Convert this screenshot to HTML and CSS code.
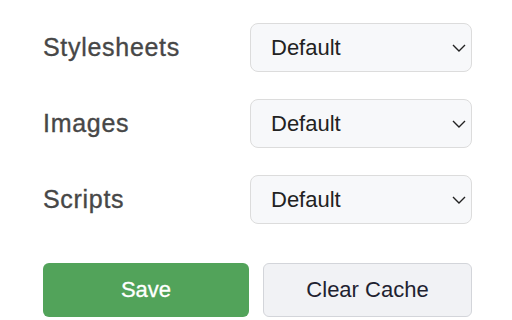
FILE: index.html
```html
<!DOCTYPE html>
<html lang="en">
<head>
  <meta charset="UTF-8">
  <meta name="viewport" content="width=device-width, initial-scale=1.0">
  <title>Cache Settings</title>
  <link rel="stylesheet" href="styles.css">
</head>
<body>
  <div class="settings">
    <div class="row">
      <label for="css">Stylesheets</label>
      <div class="select-wrap">
        <select id="css"><option>Default</option></select>
        <svg class="chevron" width="14" height="8" viewBox="0 0 14 8"><path d="M1 1l6 6 6-6" fill="none" stroke="#222" stroke-width="1.4"/></svg>
      </div>
    </div>
    <div class="row">
      <label for="img">Images</label>
      <div class="select-wrap">
        <select id="img"><option>Default</option></select>
        <svg class="chevron" width="14" height="8" viewBox="0 0 14 8"><path d="M1 1l6 6 6-6" fill="none" stroke="#222" stroke-width="1.4"/></svg>
      </div>
    </div>
    <div class="row">
      <label for="js">Scripts</label>
      <div class="select-wrap">
        <select id="js"><option>Default</option></select>
        <svg class="chevron" width="14" height="8" viewBox="0 0 14 8"><path d="M1 1l6 6 6-6" fill="none" stroke="#222" stroke-width="1.4"/></svg>
      </div>
    </div>

    <div class="actions">
      <button class="btn btn-save">Save</button>
      <button class="btn btn-clear">Clear Cache</button>
    </div>
  </div>
</body>
</html>
```

FILE: styles.css
```css
body {
  margin: 0;
  font-family: 'Liberation Sans', Arial, sans-serif;
  background: #fff;
}

.settings {
  width: 429px;
  padding: 23px 0 0 43px;
  display: flex;
  flex-direction: column;
  gap: 27px;
}

.row {
  display: grid;
  grid-template-columns: 207px 1fr;
  align-items: center;
}

.row label {
  font-size: 25px;
  letter-spacing: 0.7px;
  color: #474747;
  -webkit-text-stroke: 0.35px #474747;
}

.select-wrap {
  position: relative;
}

.select-wrap select {
  appearance: none;
  -webkit-appearance: none;
  width: 100%;
  height: 49px;
  padding: 0 0 0 20px;
  font-family: inherit;
  font-size: 22px;
  color: #222;
  background: #f7f8fa;
  border: 1.5px solid #dcdcdc;
  border-radius: 8px;
}

.chevron {
  position: absolute;
  right: 6px;
  top: 21px;
  pointer-events: none;
}

.actions {
  display: grid;
  grid-template-columns: 206px 1fr;
  gap: 14px;
  margin-top: 12px;
}

.btn {
  height: 54px;
  font-family: inherit;
  font-size: 22px;
  border-radius: 6px;
}

.btn-save {
  background: #52a35a;
  border: none;
  color: #fff;
  -webkit-text-stroke: 0.3px #fff;
}

.btn-clear {
  background: #f1f2f5;
  border: 1.5px solid #d3d5da;
  color: #1e2230;
}
```
